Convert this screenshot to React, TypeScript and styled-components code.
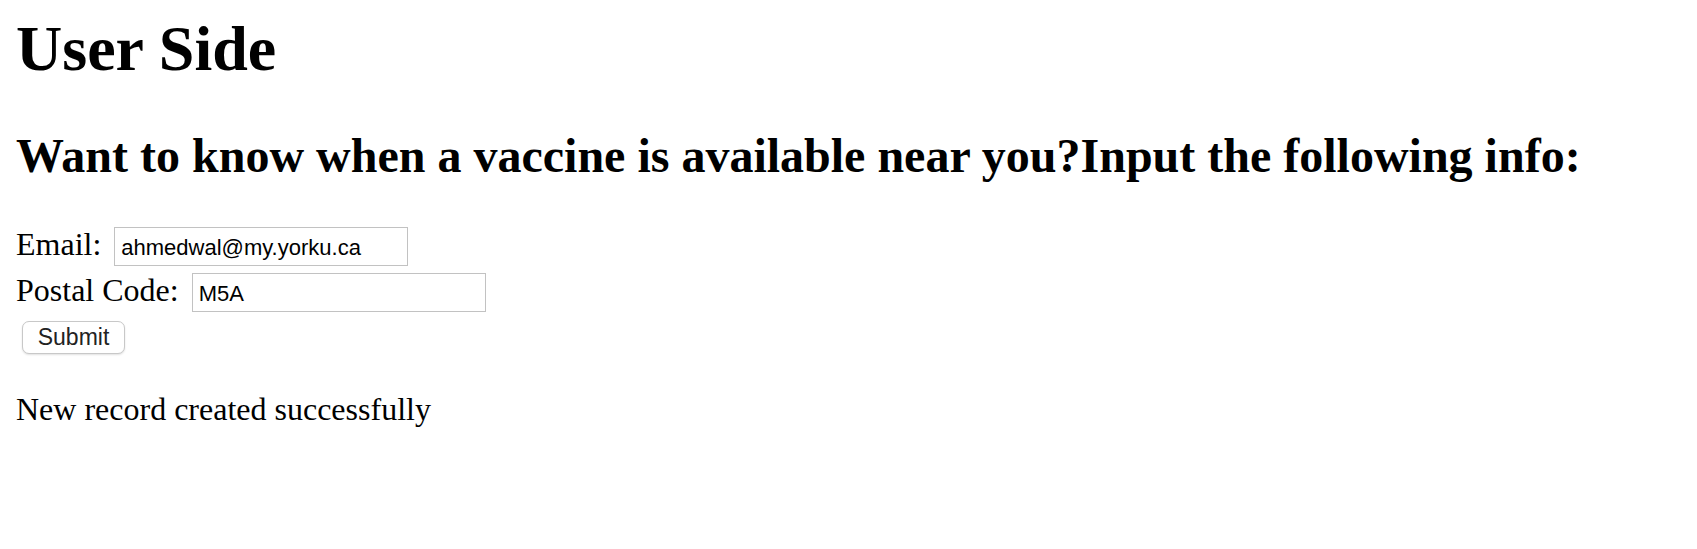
import React from 'react';
import styled, { createGlobalStyle } from 'styled-components';

const GlobalStyle = createGlobalStyle`
  html, body {
    margin: 0;
    padding: 0;
    background: #ffffff;
  }

  body {
    font-family: 'Liberation Serif', 'Times New Roman', serif;
    color: #000000;
  }
`;

export const Page = styled.div`
  padding: 12px 16px 0;
`;

export const Title = styled.h1`
  margin: 0;
  font-size: 64px;
  line-height: 74px;
  font-weight: 700;
`;

export const Subtitle = styled.h2`
  margin: 42px 0 0;
  font-size: 48px;
  line-height: 56px;
  font-weight: 700;
`;

export const SignupForm = styled.form`
  margin-top: 39px;
  display: flex;
  flex-direction: column;
  align-items: flex-start;
`;

export const FieldRow = styled.div`
  display: flex;
  align-items: baseline;
  gap: 13px;
`;

export const FieldLabel = styled.label`
  font-size: 32px;
  line-height: 37px;
`;

export const FieldInput = styled.input`
  box-sizing: border-box;
  width: 294px;
  height: 39px;
  margin: 4px 0 3px;
  padding: 3px 6px 0;
  border: 1.5px solid #c2c2c2;
  border-radius: 0;
  font-family: 'Liberation Sans', Arial, sans-serif;
  font-size: 22px;
  color: #000000;
  background: #ffffff;
  outline: none;
`;

export const SubmitButton = styled.button`
  box-sizing: border-box;
  margin: 6px 0 0 6px;
  width: 103px;
  height: 33px;
  padding: 0;
  border: 1px solid #c8c8c8;
  border-radius: 7px;
  background: #ffffff;
  box-shadow: 0 1px 2px rgba(0, 0, 0, 0.12);
  font-family: 'Liberation Sans', Arial, sans-serif;
  font-size: 23px;
  color: #222222;
`;

export const StatusMessage = styled.p`
  margin: 37px 0 0;
  font-size: 32px;
  line-height: 37px;
`;

export default function App() {
  return (
    <>
      <GlobalStyle />
      <Page>
        <Title>User Side</Title>

        <Subtitle>
          Want to know when a vaccine is available near you?Input the following info:
        </Subtitle>

        <SignupForm onSubmit={(e) => e.preventDefault()}>
          <FieldRow>
            <FieldLabel htmlFor='email'>Email:</FieldLabel>
            <FieldInput id='email' type='text' defaultValue='ahmedwal@my.yorku.ca' />
          </FieldRow>

          <FieldRow>
            <FieldLabel htmlFor='postal'>Postal Code:</FieldLabel>
            <FieldInput id='postal' type='text' defaultValue='M5A' />
          </FieldRow>

          <SubmitButton type='submit'>Submit</SubmitButton>
        </SignupForm>

        <StatusMessage>New record created successfully</StatusMessage>
      </Page>
    </>
  );
}
